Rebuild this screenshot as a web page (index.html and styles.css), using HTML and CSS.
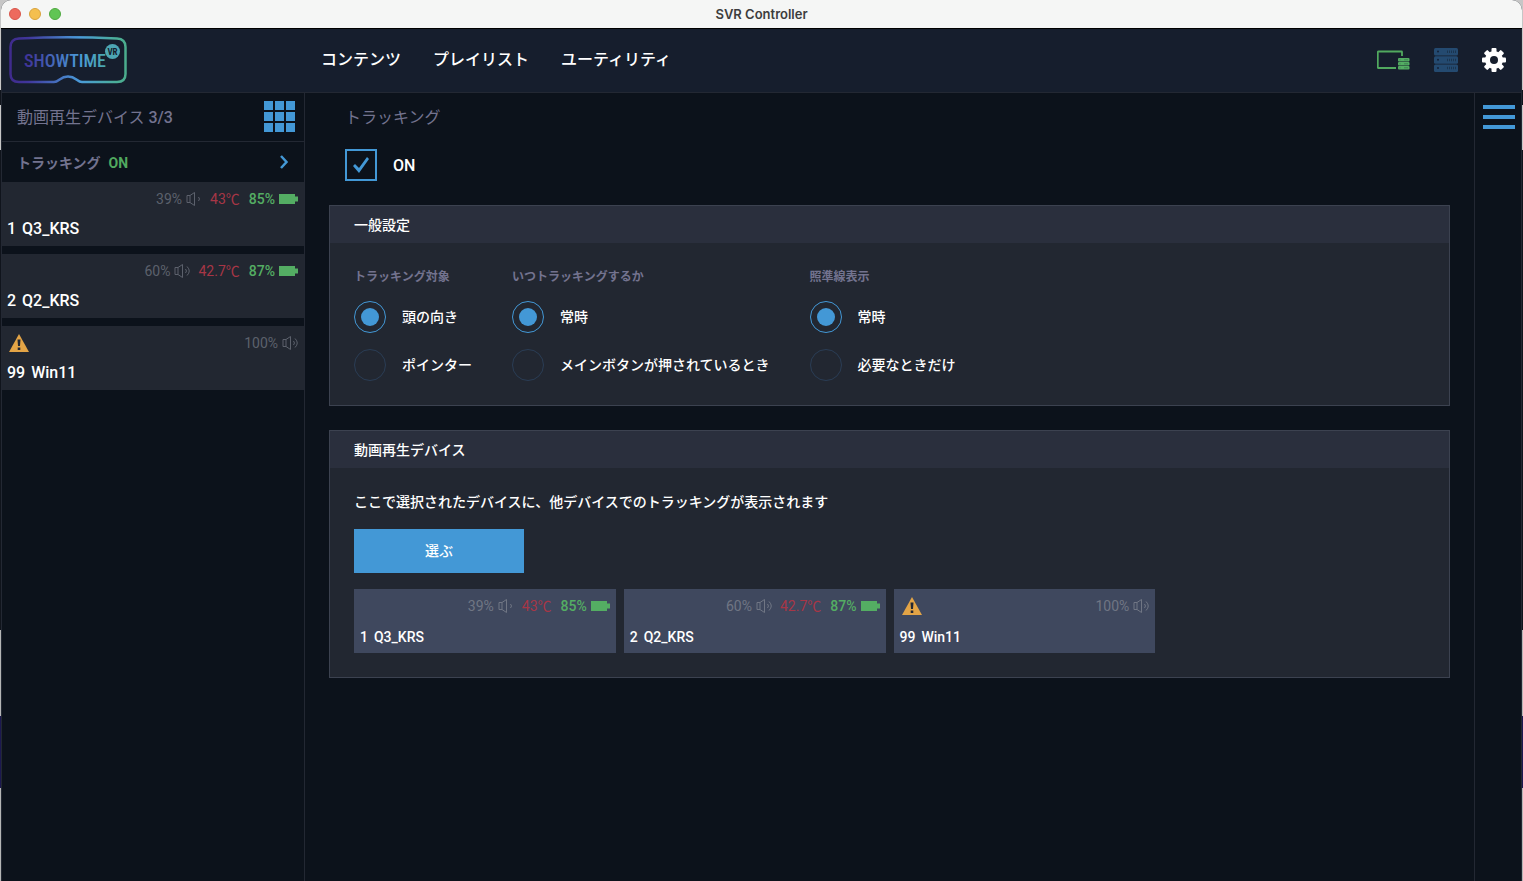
FILE: index.html
```html
<!DOCTYPE html>
<html lang="ja">
<head>
<meta charset="utf-8">
<title>SVR Controller</title>
<link rel="stylesheet" href="styles.css">
</head>
<body>
<svg class="defs" width="0" height="0" aria-hidden="true">
  <symbol id="speaker-low" viewBox="0 0 16 16">
    <path d="M1 4.500h3v7H1zM4 4.500L8.500 1.500v13L4 11.500M12.500 6q2 2 0 4" fill="none" stroke="currentColor"/>
  </symbol>
  <symbol id="speaker-high" viewBox="0 0 16 16">
    <path d="M1 4.500h3v7H1zM4 4.500L8.500 1.500v13L4 11.500M11.500 6q2 2 0 4M13 3.500q4.500 4.500 0 9" fill="none" stroke="currentColor"/>
  </symbol>
  <symbol id="battery" viewBox="0 0 19 10">
    <path d="M0 0h16v2.500h3v5h-3V10H0z" fill="currentColor"/>
  </symbol>
  <symbol id="warning" viewBox="0 0 20 18">
    <path d="M10 0l10 18H0z" fill="#e3a446"/>
    <path d="M8.500 5.500h3l-.5 6.500H9zM8.700 13.500h2.600V16H8.700z" fill="#222733"/>
  </symbol>
</svg>
<div class="window">
  <div class="titlebar">
    <div class="lights"><span class="light red"></span><span class="light yellow"></span><span class="light green"></span></div>
    <span class="window-title">SVR Controller</span>
  </div>
  <header class="header">
    <a class="logo" href="#" aria-label="Showtime VR">
      <svg width="118" height="48" viewBox="0 0 118 48">
        <defs>
          <linearGradient id="brand" gradientUnits="userSpaceOnUse" x1="0" y1="0" x2="118" y2="0">
            <stop offset="0" stop-color="#3f2a8c"/>
            <stop offset=".16" stop-color="#40369b"/>
            <stop offset=".6" stop-color="#4a9bd9"/>
            <stop offset=".9" stop-color="#4bae9a"/>
            <stop offset="1" stop-color="#4bac8b"/>
          </linearGradient>
        </defs>
        <path d="M10 2.500Q59 0 108 2.500Q116.500 3 116.500 11V38Q116.500 46 108 46H73C68 46 67 40.500 59 40.500S50 46 45 46H10Q1.500 46 1.500 38V11Q1.500 3 10 2.500Z" fill="none" stroke="url(#brand)" stroke-width="2.500"/>
        <text class="logo-word" x="15" y="31" fill="url(#brand)">SHOWTIME</text>
        <circle cx="103.500" cy="15.500" r="7.500" fill="#4da6b4"/>
        <text class="logo-vr" x="103.500" y="19" text-anchor="middle">VR</text>
      </svg>
    </a>
    <nav class="nav">
      <a href="#">コンテンツ</a>
      <a href="#">プレイリスト</a>
      <a href="#">ユーティリティ</a>
    </nav>
    <div class="tools">
      <button type="button" aria-label="デバイス接続">
        <svg width="33" height="24" viewBox="0 0 33 24">
          <path d="M25 8V4Q25 3.500 24.500 3.500H1.500Q.8 3.500.8 4.200V19.300Q.8 20 1.500 20H19" fill="none" stroke="#51a95f" stroke-width="1.800"/>
          <g fill="#54ad63"><rect x="21" y="10" width="11.500" height="3.600" rx="1"/><rect x="21" y="14" width="11.500" height="3.600" rx="1"/><rect x="21" y="18" width="11.500" height="3.600" rx="1"/></g>
          <path d="M27 11.800h4M27 15.800h4M27 19.800h4M22.500 11.800h1M22.500 15.800h1M22.500 19.800h1" stroke="#377a4b" stroke-width=".8"/>
        </svg>
      </button>
      <button type="button" aria-label="サーバー">
        <svg width="24" height="24" viewBox="0 0 24 24">
          <g fill="#244a70"><rect width="24" height="7.500" rx="1.500"/><rect y="8.200" width="24" height="7.500" rx="1.500"/><rect y="16.400" width="24" height="7.500" rx="1.500"/></g>
          <path d="M13 3.700h9M13 11.900h9M13 20.100h9" stroke="#1b3550" stroke-width="2.500" stroke-dasharray="1 1"/>
          <g fill="#142238"><circle cx="4" cy="3.500" r="1"/><circle cx="4" cy="11.700" r="1"/><circle cx="4" cy="19.900" r="1"/></g>
        </svg>
      </button>
      <button type="button" aria-label="設定">
        <svg width="24" height="24" viewBox="0 0 24 24">
          <g fill="#fff">
            <rect x="9.500" y="0" width="5" height="24" rx="1"/>
            <rect x="9.500" y="0" width="5" height="24" rx="1" transform="rotate(45 12 12)"/>
            <rect x="9.500" y="0" width="5" height="24" rx="1" transform="rotate(90 12 12)"/>
            <rect x="9.500" y="0" width="5" height="24" rx="1" transform="rotate(135 12 12)"/>
            <circle cx="12" cy="12" r="9"/>
          </g>
          <circle cx="12" cy="12" r="4" fill="#161e2d"/>
        </svg>
      </button>
    </div>
  </header>
  <div class="workspace">
    <aside class="sidebar">
      <div class="sidebar-head">
        <h2>動画再生デバイス <b>3/3</b></h2>
        <button type="button" aria-label="グリッド表示">
          <svg width="31" height="31" viewBox="0 0 31 31" fill="#4398d6"><path d="M0 0h9v9H0zM11 0h9v9h-9zM22 0h9v9h-9zM0 11h9v9H0zM11 11h9v9h-9zM22 11h9v9h-9zM0 22h9v9H0zM11 22h9v9h-9zM22 22h9v9h-9z"/></svg>
        </button>
      </div>
      <button type="button" class="tracking-row">
        <span>トラッキング</span><span class="on">ON</span>
        <svg width="10" height="14" viewBox="0 0 10 14"><path d="M2 1l5.500 6L2 13" fill="none" stroke="#4398d6" stroke-width="2.500"/></svg>
      </button>
      <ul class="device-list">
        <li class="device">
          <div class="status"><span>39%</span><svg class="speaker"><use href="#speaker-low"/></svg><span class="temp">43℃</span><span class="charge">85%</span><svg class="battery"><use href="#battery"/></svg></div>
          <div class="name"><span>1</span><span>Q3_KRS</span></div>
        </li>
        <li class="device">
          <div class="status"><span>60%</span><svg class="speaker"><use href="#speaker-high"/></svg><span class="temp">42.7℃</span><span class="charge">87%</span><svg class="battery"><use href="#battery"/></svg></div>
          <div class="name"><span>2</span><span>Q2_KRS</span></div>
        </li>
        <li class="device">
          <div class="status"><svg class="warning"><use href="#warning"/></svg><span>100%</span><svg class="speaker"><use href="#speaker-high"/></svg></div>
          <div class="name"><span>99</span><span>Win11</span></div>
        </li>
      </ul>
    </aside>
    <main class="main">
      <h1>トラッキング</h1>
      <label class="toggle"><input type="checkbox" checked><span>ON</span></label>
      <section class="panel">
        <h2>一般設定</h2>
        <div class="panel-body options">
          <fieldset>
            <legend>トラッキング対象</legend>
            <label><input type="radio" name="target" checked>頭の向き</label>
            <label><input type="radio" name="target">ポインター</label>
          </fieldset>
          <fieldset>
            <legend>いつトラッキングするか</legend>
            <label><input type="radio" name="when" checked>常時</label>
            <label><input type="radio" name="when">メインボタンが押されているとき</label>
          </fieldset>
          <fieldset>
            <legend>照準線表示</legend>
            <label><input type="radio" name="aim" checked>常時</label>
            <label><input type="radio" name="aim">必要なときだけ</label>
          </fieldset>
        </div>
      </section>
      <section class="panel">
        <h2>動画再生デバイス</h2>
        <div class="panel-body targets">
          <p>ここで選択されたデバイスに、他デバイスでのトラッキングが表示されます</p>
          <button type="button" class="choose">選ぶ</button>
          <ul class="device-grid">
            <li class="device">
              <div class="status"><span>39%</span><svg class="speaker"><use href="#speaker-low"/></svg><span class="temp">43℃</span><span class="charge">85%</span><svg class="battery"><use href="#battery"/></svg></div>
              <div class="name"><span>1</span><span>Q3_KRS</span></div>
            </li>
            <li class="device">
              <div class="status"><span>60%</span><svg class="speaker"><use href="#speaker-high"/></svg><span class="temp">42.7℃</span><span class="charge">87%</span><svg class="battery"><use href="#battery"/></svg></div>
              <div class="name"><span>2</span><span>Q2_KRS</span></div>
            </li>
            <li class="device">
              <div class="status"><svg class="warning"><use href="#warning"/></svg><span>100%</span><svg class="speaker"><use href="#speaker-high"/></svg></div>
              <div class="name"><span>99</span><span>Win11</span></div>
            </li>
          </ul>
        </div>
      </section>
    </main>
    <aside class="rail">
      <button type="button" aria-label="メニュー">
        <svg width="32" height="24" viewBox="0 0 32 24" fill="#4398d6"><path d="M0 0h32v4H0zM0 10h32v4H0zM0 20h32v4H0z"/></svg>
      </button>
    </aside>
  </div>
</div>
</body>
</html>
```
FILE: styles.css
```css
* { box-sizing: border-box; }

body {
  margin: 0;
  padding: 0 1px;
  min-height: 100vh;
  background: linear-gradient(#c6c6c6 90px, #10141c 90px, #10141c 105px, #c6c6c6 105px, #c6c6c6 150px, #10141c 150px, #10141c 630px, #b5b5b5 630px, #b5b5b5 716px, #1c1850 716px, #1c1850 788px, #b5b5b5 788px);
  color: #fff;
  font: 500 14px/20px Roboto, "Noto Sans CJK JP", sans-serif;
}

h1, h2, p, ul, fieldset, legend { margin: 0; padding: 0; border: 0; }
ul { list-style: none; }
a { color: inherit; text-decoration: none; }
button { margin: 0; padding: 0; border: 0; background: none; color: inherit; font: inherit; cursor: pointer; }
svg { display: block; flex: none; }
.defs { position: absolute; }

.window {
  display: flex;
  flex-direction: column;
  min-height: 100vh;
  border-radius: 10px 10px 0 0;
  overflow: hidden;
  background: #0c121b;
}

.titlebar {
  display: grid;
  grid-template-columns: 1fr auto 1fr;
  align-items: center;
  height: 29px;
  padding: 0 8px;
  background: #f5f6f5;
  border-bottom: 1px solid #000;
}
.lights { display: flex; gap: 8px; }
.light { width: 12px; height: 12px; border-radius: 50%; border: 1px solid; }
.red { background: #ed6a5e; border-color: #d8564b; }
.yellow { background: #f4bf4f; border-color: #d9a33c; }
.green { background: #61c554; border-color: #4fa93f; }
.window-title { color: #3d3d3d; font: 600 13px/16px Inter, sans-serif; }

.header {
  display: flex;
  align-items: center;
  height: 64px;
  padding: 0 15px 1px 7px;
  border: solid #232833;
  border-width: 0 1px 1px;
  background: #161e2d;
}
.logo { width: 312px; }
.logo-word { font: 500 18px "Roboto Condensed", "Liberation Sans Narrow", Roboto, sans-serif; }
.logo-vr { font: 700 9px "Roboto Condensed", "Liberation Sans Narrow", Roboto, sans-serif; fill: #161e2d; }
.nav { display: flex; gap: 32px; font-size: 16px; line-height: 24px; }
.tools { display: flex; align-items: center; gap: 24px; margin-left: auto; }

.workspace { display: flex; flex: 1; border: solid #232833; border-width: 0 1px; }
.sidebar { width: 303px; flex: none; border-right: 1px solid #232833; }
.sidebar-head {
  display: flex;
  align-items: center;
  justify-content: space-between;
  height: 49px;
  padding: 0 9px 1px 15px;
  border-bottom: 1px solid #232833;
}
.sidebar-head h2 { padding-top: 2px; color: #73738f; font-size: 16px; font-weight: 400; line-height: 24px; }
.sidebar-head b { font-weight: 500; }
.tracking-row {
  display: flex;
  align-items: center;
  gap: 8px;
  width: 100%;
  height: 40px;
  padding: 0 15px;
  color: #73738f;
  font-weight: 700;
}
.tracking-row span { padding-top: 2px; }
.tracking-row svg { margin-left: auto; }
.on { color: #51a95f; }

.device-list { display: grid; gap: 8px; }
.device { height: 64px; padding: 7px 6px 0 5px; background: #222731; }
.status { display: flex; align-items: center; justify-content: flex-end; height: 20px; color: #5c616c; font-weight: 400; }
.speaker { width: 16px; height: 16px; margin-left: 4px; }
.temp { margin-left: 8px; color: #a73646; }
.charge { margin: 0 4px 0 9px; color: #54ad63; font-weight: 500; }
.battery { width: 19px; height: 10px; color: #54ad63; }
.warning { width: 20px; height: 18px; margin: 0 auto 0 2px; }
.name { display: flex; gap: 6px; font-size: 16px; line-height: 24px; margin-top: 8px; }

.main { flex: 1; min-width: 0; padding: 0 24px 24px; }
.main h1 { padding: 13px 16px 11px; color: #73738f; font-size: 16px; font-weight: 400; line-height: 24px; }
.toggle { display: inline-flex; align-items: center; gap: 16px; margin: 8px 16px 24px; font-size: 16px; vertical-align: top; }
.toggle span { padding-top: 2px; }
.toggle input {
  appearance: none;
  display: grid;
  place-items: center;
  width: 32px;
  height: 32px;
  margin: 0;
  border: 2px solid #4398d6;
}
.toggle input:checked::before {
  content: "";
  width: 18px;
  height: 18px;
  background: #4398d6;
  clip-path: polygon(1px 10px, 3px 8px, 7px 12px, 15px 1px, 17px 3px, 7px 17px);
}

.panel { margin-bottom: 24px; border: 1px solid #3c4250; background: #222731; }
.panel h2 { padding: 9px 24px 8px; background: #2a2f3d; font-size: 14px; font-weight: 500; line-height: 20px; }
.panel-body { padding: 24px; }
.options { display: flex; flex-wrap: wrap; gap: 40px; }
fieldset { min-width: 0; }
legend { padding-top: 2px; margin-bottom: 16px; color: #73738f; font-size: 12px; font-weight: 700; line-height: 16px; }
fieldset label { display: flex; align-items: center; gap: 16px; }
fieldset label + label { margin-top: 16px; }
fieldset input {
  appearance: none;
  display: grid;
  place-items: center;
  width: 32px;
  height: 32px;
  margin: 0;
  border: 1px solid #2a3d55;
  border-radius: 50%;
}
fieldset input:checked { border-color: #4398d6; }
fieldset input:checked::before { content: ""; width: 18px; height: 18px; border-radius: 50%; background: #4398d6; }

.targets { display: grid; justify-items: start; gap: 16px; }
.targets p { line-height: 21px; }
.choose { width: 170px; height: 44px; background: #4398d6; }
.device-grid { display: grid; grid-template-columns: repeat(4, 1fr); gap: 8px; width: 100%; }
.device-grid .device { padding-left: 6px; background: #3f485e; }
.device-grid .status { color: #707684; }
.device-grid .name { font-size: 14px; margin-top: 9px; }

.rail { width: 47px; flex: none; padding: 12px 6px 0 8px; border-left: 1px solid #232833; }
.rail button { display: block; }
```
